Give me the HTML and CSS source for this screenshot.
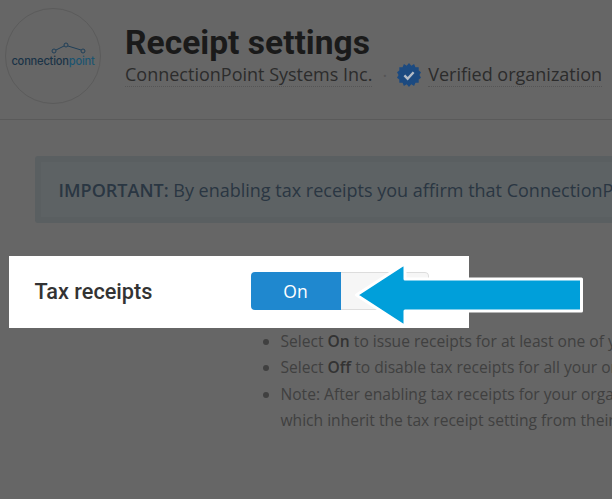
FILE: index.html
```html
<!DOCTYPE html>
<html lang="en">

<head>
    <meta charset="UTF-8">
    <title>Receipt settings</title>
    <link rel="stylesheet" href="styles.css">
</head>

<body>
    <div class="page-head">
        <div class="logo">
            <svg class="logo-mark" width="96" height="96" viewBox="0 0 96 96">
                <g fill="none" stroke="#1f3f58" stroke-width="1">
                    <path d="M51 42L59 38M63 38L76 42" />
                    <circle cx="49" cy="43" r="2" />
                    <circle cx="61" cy="37" r="2" />
                    <circle cx="78" cy="43" r="2" />
                </g>
            </svg>
            <span class="logo-text">connection<span class="logo-point">point</span></span>
        </div>
        <div class="head-text">
            <h1>Receipt settings</h1>
            <div class="org-line">
                <span class="org-link">ConnectionPoint Systems Inc.</span>
                <span class="dot">·</span>
                <svg class="badge" width="24" height="24" viewBox="0 0 26 26">
                    <polygon fill="#1c4a80" points="13,0 15.500,3 18.500,1.200 20,4.500 23.500,4.500 23.500,8 26,10 24.300,13 26,16 23.500,18 23.500,21.500 20,21.500 18.500,24.800 15.500,23 13,26 10.500,23 7.500,24.800 6,21.500 2.500,21.500 2.500,18 0,16 1.700,13 0,10 2.500,8 2.500,4.500 6,4.500 7.500,1.200 10.500,3" />
                    <path d="M8 13.500L11.500 17L18 10" fill="none" stroke="#b4bcc6" stroke-width="2.600" />
                </svg>
                <span class="org-link">Verified organization</span>
            </div>
        </div>
    </div>

    <div class="notice"><b>IMPORTANT:</b> By enabling tax receipts you affirm that ConnectionPoint Systems Inc. is registered</div>

    <div class="setting">
        <span class="setting-label">Tax receipts</span>
        <div class="toggle">
            <span class="toggle-on">On</span>
            <span class="toggle-off">Off</span>
        </div>
    </div>

    <ul class="help">
        <li>Select <b>On</b> to issue receipts for at least one of your organizations</li>
        <li>Select <b>Off</b> to disable tax receipts for all your organizations</li>
        <li>Note: After enabling tax receipts for your organization, check campaigns<br>which inherit the tax receipt setting from their parent</li>
    </ul>

    <svg class="arrow" width="234" height="74" viewBox="0 0 234 74">
        <polygon fill="#009fda" stroke="#fff" stroke-width="3" stroke-linejoin="round" points="4.500,37 53,5.500 53,21 229.500,21 229.500,53 53,53 53,68.500" />
    </svg>
</body>

</html>
```

FILE: styles.css
```css
* {
    margin: 0;
    padding: 0;
    box-sizing: border-box;
}

html {
    background: #666;
}

body {
    position: relative;
    width: 612px;
    height: 499px;
    overflow: hidden;
    font-family: "Open Sans", "Liberation Sans", sans-serif;
    color: #333;
}

.page-head {
    height: 120px;
    padding: 8px 0 0 5px;
    display: flex;
    gap: 24px;
    border-bottom: 1px solid #5a5a5a;
}

.logo {
    position: relative;
    width: 96px;
    height: 96px;
    flex: none;
    border: 1px solid #5b5b5b;
    border-radius: 50%;
    display: flex;
    align-items: center;
    justify-content: center;
}

.logo-mark {
    position: absolute;
    left: -1px;
    top: -1px;
}

.logo-text {
    margin-top: 9px;
    font-family: "Inter", "Liberation Sans", sans-serif;
    font-size: 11.100px;
    font-weight: 500;
    letter-spacing: -0.2px;
    color: #1a3347;
}

.logo-point {
    color: #1c5470;
}

.head-text {
    padding-top: 16px;
}

h1 {
    font-family: Roboto, "Liberation Sans", sans-serif;
    font-size: 33.600px;
    line-height: 38px;
    font-weight: 700;
    color: #1a1a1a;
}

.org-line {
    display: flex;
    align-items: center;
    white-space: nowrap;
    font-size: 18px;
    line-height: 24px;
    color: #2c2c2c;
}

.org-link {
    border-bottom: 1px dotted #555;
}

.dot {
    margin: 0 10px;
    color: #555;
}

.badge {
    margin-right: 7px;
}

.notice {
    width: 640px;
    height: 67px;
    margin: 36px 0 0 35px;
    padding: 0 17.500px;
    border: 6px solid #5a5f61;
    border-radius: 3px;
    background: #5d6264;
    color: #2a3642;
    font-size: 18px;
    line-height: 56px;
    white-space: nowrap;
    overflow: hidden;
}

.notice b {
    font-weight: 600;
}

.setting {
    width: 460px;
    height: 72px;
    margin: 33px 0 0 9px;
    padding: 0 0 2px 25.500px;
    background: #fff;
    display: flex;
    align-items: center;
}

.setting-label {
    width: 216.500px;
    font-family: Roboto, "Liberation Sans", sans-serif;
    font-size: 21.700px;
    font-weight: 500;
    color: #333;
}

.toggle {
    width: 178px;
    height: 38px;
    display: flex;
    font-size: 17.500px;
    line-height: 38px;
    text-align: center;
    border-radius: 4px;
    overflow: hidden;
}

.toggle-on {
    width: 90px;
    padding-right: 1px;
    background: #1f88cf;
    color: #fff;
}

.toggle-off {
    width: 88px;
    background: #f6f6f6;
    border: 1px solid #ddd;
    border-left: 0;
    border-radius: 0 4px 4px 0;
    line-height: 36px;
    color: #555;
}

.help {
    width: 400px;
    margin: 0 0 0 280.500px;
    font-size: 15.600px;
    line-height: 26.400px;
    color: #404040;
    white-space: nowrap;
}

.help b {
    font-weight: 600;
    color: #333;
}

.arrow {
    position: absolute;
    left: 352px;
    top: 258px;
}
```
